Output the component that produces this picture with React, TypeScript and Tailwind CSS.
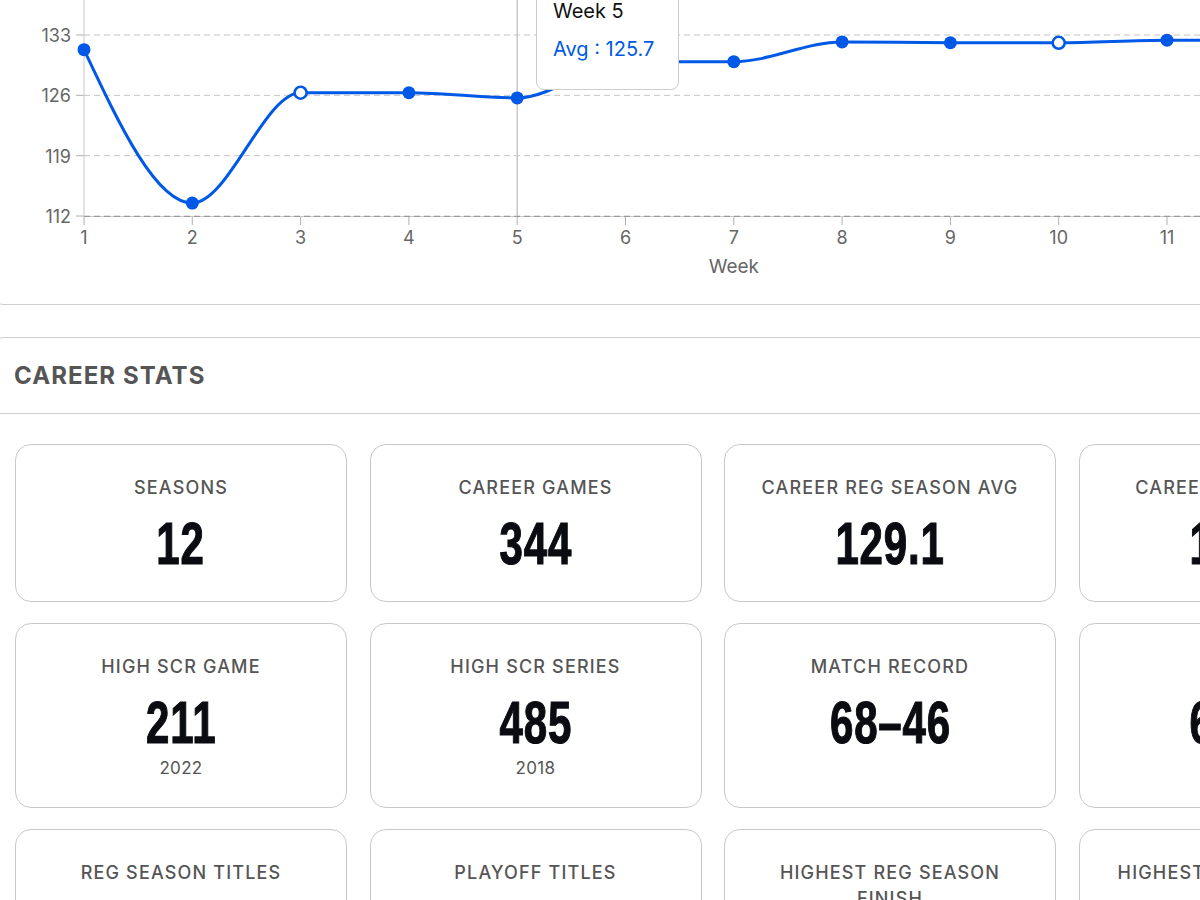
import React from "react";

type WeekPoint = { week: number; avg: number; blind?: boolean };

const weeks: WeekPoint[] = [
  { week: 1, avg: 131.3 },
  { week: 2, avg: 113.5 },
  { week: 3, avg: 126.3, blind: true },
  { week: 4, avg: 126.3 },
  { week: 5, avg: 125.7 },
  { week: 6, avg: 129.9 },
  { week: 7, avg: 129.9 },
  { week: 8, avg: 132.2 },
  { week: 9, avg: 132.1 },
  { week: 10, avg: 132.1, blind: true },
  { week: 11, avg: 132.4 },
  { week: 12, avg: 132.4 },
];

type Stat = { label: string; value: string; sub?: string };

const stats: Stat[] = [
  { label: "Seasons", value: "12" },
  { label: "Career Games", value: "344" },
  { label: "Career Reg Season Avg", value: "129.1" },
  { label: "Career Playoff Avg", value: "131.4" },
  { label: "High Scr Game", value: "211", sub: "2022" },
  { label: "High Scr Series", value: "485", sub: "2018" },
  { label: "Match Record", value: "68–46" },
  { label: "Points", value: "612.5" },
  { label: "Reg Season Titles", value: "2" },
  { label: "Playoff Titles", value: "1" },
  { label: "Highest Reg Season Finish", value: "1st" },
  { label: "Highest Playoff Finish", value: "2nd" },
];

const BLUE = "#0059e6";
const yTicks = [112, 119, 126, 133];
const xOf = (w: number) => 84 + (w - 1) * 108.3;
const yOf = (v: number) => 216 - (v - 112) * (181 / 21);

// monotone-x cubic, same maths as d3's curveMonotoneX
function monotonePath(pts: [number, number][]) {
  const n = pts.length;
  const t: number[] = new Array(n).fill(0);
  const sign = (v: number) => (v < 0 ? -1 : 1);
  for (let i = 1; i < n - 1; i++) {
    const [x0, y0] = pts[i - 1];
    const [x1, y1] = pts[i];
    const [x2, y2] = pts[i + 1];
    const h0 = x1 - x0;
    const h1 = x2 - x1;
    const s0 = (y1 - y0) / h0;
    const s1 = (y2 - y1) / h1;
    const p = (s0 * h1 + s1 * h0) / (h0 + h1);
    t[i] = (sign(s0) + sign(s1)) * Math.min(Math.abs(s0), Math.abs(s1), 0.5 * Math.abs(p)) || 0;
  }
  const h = pts[1][0] - pts[0][0];
  t[0] = (3 * (pts[1][1] - pts[0][1]) / h - t[1]) / 2;
  const hl = pts[n - 1][0] - pts[n - 2][0];
  t[n - 1] = (3 * (pts[n - 1][1] - pts[n - 2][1]) / hl - t[n - 2]) / 2;

  let d = `M${pts[0][0]},${pts[0][1]}`;
  for (let i = 0; i < n - 1; i++) {
    const [x0, y0] = pts[i];
    const [x1, y1] = pts[i + 1];
    const dx = (x1 - x0) / 3;
    d += `C${x0 + dx},${y0 + dx * t[i]},${x1 - dx},${y1 - dx * t[i + 1]},${x1},${y1}`;
  }
  return d;
}

function AvgChart() {
  const pts = weeks.map((w) => [xOf(w.week), yOf(w.avg)] as [number, number]);
  return (
    <div className="relative -mt-[40px] h-[345px] rounded-xl border border-[#cfcfcf] bg-white overflow-hidden">
      <svg width={1400} height={343} viewBox="-8 -39 1400 343" className="block">
        {yTicks.map((v) => (
          <g key={v}>
            <line x1={84} x2={1400} y1={yOf(v)} y2={yOf(v)} stroke="#c4c4c4" strokeDasharray="6 4" />
            <line x1={76} x2={84} y1={yOf(v)} y2={yOf(v)} stroke="#b0b0b0" />
            <text x={71} y={yOf(v) + 7} textAnchor="end" fontSize={18} fill="#666" fontFamily="Inter, sans-serif">
              {v}
            </text>
          </g>
        ))}
        {/* axes */}
        <line x1={84} x2={84} y1={-39} y2={216} stroke="#c8c8c8" />
        <line x1={84} x2={1400} y1={216.5} y2={216.5} stroke="#c8c8c8" />
        <line x1={84} x2={1400} y1={216.5} y2={216.5} stroke="#9a9a9a" strokeDasharray="6 4" />
        {weeks.map((w) => (
          <g key={w.week}>
            <line x1={xOf(w.week)} x2={xOf(w.week)} y1={217} y2={225} stroke="#b0b0b0" />
            <text x={xOf(w.week)} y={244} textAnchor="middle" fontSize={18} fill="#666" fontFamily="Inter, sans-serif">
              {w.week}
            </text>
          </g>
        ))}
        <text x={xOf(7)} y={273} textAnchor="middle" fontSize={19} fill="#666" fontFamily="Inter, sans-serif">
          Week
        </text>
        {/* hover cursor */}
        <line x1={xOf(5)} x2={xOf(5)} y1={-39} y2={216} stroke="#c8c8c8" strokeWidth={1.5} />
        <path d={monotonePath(pts)} fill="none" stroke={BLUE} strokeWidth={3} />
        {weeks.map((w) =>
          w.blind ? (
            <circle key={w.week} cx={xOf(w.week)} cy={yOf(w.avg)} r={6} fill="#fff" stroke={BLUE} strokeWidth={2.5} />
          ) : (
            <circle key={w.week} cx={xOf(w.week)} cy={yOf(w.avg)} r={6.5} fill={BLUE} />
          )
        )}
      </svg>
      <div className="absolute left-[544px] top-[27px] h-[102px] w-[143px] rounded-lg border border-[#cccccc] bg-white px-[16px] pt-[8px] text-[20px] leading-[28px]">
        <div className="text-[#111]">Week 5</div>
        <div className="mt-[10px] text-[#0059e6]">Avg : 125.7</div>
      </div>
    </div>
  );
}

function StatTile({ stat }: { stat: Stat }) {
  return (
    <div className="flex flex-col items-center rounded-2xl border border-[#c9c9c9] bg-white px-[28px] pt-[30px] pb-[27px] text-center">
      <div className="text-[18px] leading-[26px] font-medium uppercase tracking-[0.065em] text-[#555]">
        {stat.label}
      </div>
      <div className="mt-[13px] inline-block scale-x-[0.7] whitespace-nowrap font-['Liberation_Sans',sans-serif] text-[60px] leading-[60px] font-bold tracking-[0.02em] text-[#0a0c11] [-webkit-text-stroke:1.2px_#0a0c11]">
        {stat.value}
      </div>
      {stat.sub && <div className="mt-[3px] text-[17px] leading-[24px] tracking-[0.02em] text-[#555]">{stat.sub}</div>}
    </div>
  );
}

export default function App() {
  return (
    <div className="h-[900px] w-[1200px] overflow-hidden bg-white font-['Inter',sans-serif]">
      <div className="-ml-[9px] w-[1500px]">
        <AvgChart />
        <section className="mt-[32px] rounded-t-xl border border-[#cfcfcf]">
          <div className="flex h-[76px] items-center border-b border-[#cfcfcf] pl-[22px]">
            <h2 className="text-[24px] font-bold uppercase tracking-[0.045em] text-[#555]">Career Stats</h2>
          </div>
          <div className="grid grid-cols-[repeat(4,332px)] gap-x-[22.5px] gap-y-[21px] pl-[23px] pt-[30px]">
            {stats.map((s) => (
              <StatTile key={s.label} stat={s} />
            ))}
          </div>
        </section>
      </div>
    </div>
  );
}
